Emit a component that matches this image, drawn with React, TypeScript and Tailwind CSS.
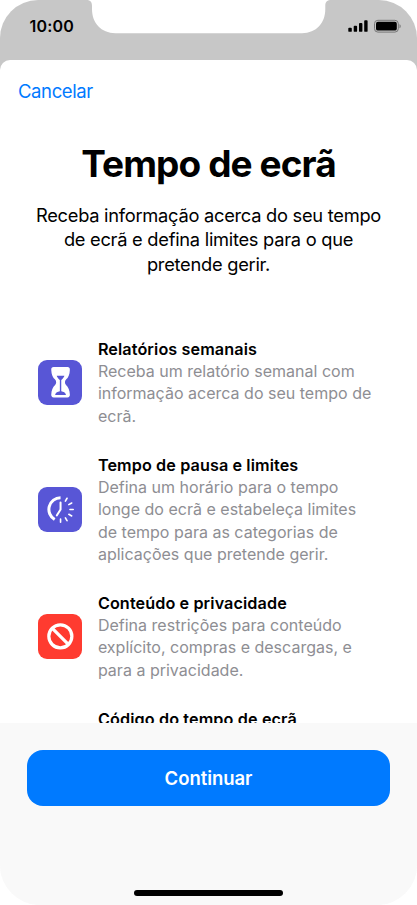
import type { ReactNode } from "react";

type Feature = {
  title: string;
  lines: string[];
  color: string;
  icon: ReactNode;
};

const HourglassIcon = () => (
  <svg viewBox="0 0 44 44" className="h-full w-full" aria-hidden="true">
    <path
      d="M15.5 7h13.6c1.7 0 2.500 1 2.400 2.800C31.300 14.500 30 17.300 27.700 19.300C26.300 20.700 26.300 23.300 27.700 24.700C30 26.700 31.300 30 31.500 34.200C31.600 36 30.800 37 29.100 37H15.500C13.800 37 13 36 13.100 34.200C13.300 30 14.600 26.700 16.900 24.700C18.300 23.300 18.300 20.700 16.900 19.300C14.600 17.300 13.300 14.500 13.100 9.800C13 8 13.800 7 15.500 7Z"
      fill="#fff"
    />
    <path
      d="M18.5 15.500h7.600c-.3 1.500-1.400 2.700-3.100 4.200v11.300c2.400.6 4 1.300 4.600 3 .1.500-.1.700-.6.700h-9.400c-.5 0-.7-.2-.6-.7.6-1.700 2.200-2.400 4.600-3v-11.300c-1.700-1.500-2.800-2.700-3.100-4.200Z"
      fill="#5856d6"
    />
  </svg>
);

const DowntimeIcon = () => (
  <svg viewBox="0 0 44 44" className="h-full w-full" fill="none" stroke="#fff" aria-hidden="true">
    <path d="M22.3 10.6A11.6 11.6 0 0 0 16.5 32.2" strokeWidth="3" />
    <path d="M22.3 15.3V22.2l-3.6 5.8" strokeWidth="2" strokeLinecap="round" strokeLinejoin="round" />
    <path
      d="M27.1 13.9l1.6-2.8M30.5 17.4l2.8-1.6M31.6 22.2h3.2M30.5 27l2.8 1.6M27.1 30.5l1.6 2.8M22.3 31.6v3.2"
      strokeWidth="1.6"
      strokeLinecap="round"
    />
  </svg>
);

const RestrictIcon = () => (
  <svg viewBox="0 0 44 44" className="h-full w-full" fill="none" stroke="#fff" strokeWidth="3.2" aria-hidden="true">
    <circle cx="22.1" cy="22.1" r="11.4" />
    <path d="M14.2 14.2L30 30" />
  </svg>
);

const features: Feature[] = [
  {
    title: "Relatórios semanais",
    lines: ["Receba um relatório semanal com", "informação acerca do seu tempo de", "ecrã."],
    color: "bg-[#5856d6]",
    icon: <HourglassIcon />,
  },
  {
    title: "Tempo de pausa e limites",
    lines: [
      "Defina um horário para o tempo",
      "longe do ecrã e estabeleça limites",
      "de tempo para as categorias de",
      "aplicações que pretende gerir.",
    ],
    color: "bg-[#5856d6]",
    icon: <DowntimeIcon />,
  },
  {
    title: "Conteúdo e privacidade",
    lines: ["Defina restrições para conteúdo", "explícito, compras e descargas, e", "para a privacidade."],
    color: "bg-[#ff3b30]",
    icon: <RestrictIcon />,
  },
];

const StatusBar = () => (
  <div className="relative h-[60px] shrink-0">
    {/* notch */}
    <svg viewBox="0 0 417 34" className="absolute inset-x-0 top-0 h-[34px] w-full" aria-hidden="true">
      <path
        d="M87.5 0C91 .5 92 2.5 92 6v3C92 23 101 33 115.5 33.2H302C316.5 33 325.3 23 325.3 9V6C325.3 2.5 326.3.5 330 0Z"
        fill="#fff"
      />
    </svg>
    <div className="relative flex h-[51px] items-center justify-between pl-[29.5px] pr-4">
      <span className="text-[16px] font-semibold tracking-[0.2px]">10:00</span>
      <svg viewBox="0 0 54 14" className="h-[14px] w-[54px]" aria-hidden="true">
        <rect x="1.3" y="8.8" width="3.5" height="4" rx=".9" />
        <rect x="6.7" y="6.8" width="3.4" height="6" rx=".9" />
        <rect x="12" y="4" width="3.4" height="8.8" rx=".9" />
        <rect x="17.2" y="1.2" width="3.4" height="11.6" rx=".9" />
        <rect x="27.5" y="1.3" width="23.8" height="11.8" rx="3.4" fill="none" stroke="#777" />
        <rect x="29" y="2.8" width="20.8" height="8.8" rx="1.9" />
        <path d="M52.5 5.2c1.6.6 1.6 3.4 0 4Z" fill="#777" />
      </svg>
    </div>
  </div>
);

const FeatureRow = ({ feature }: { feature: Feature }) => (
  <li className="flex items-center gap-[15.5px]">
    <div className={`h-[44.5px] w-[44.5px] shrink-0 overflow-hidden rounded-[9px] ${feature.color}`}>
      {feature.icon}
    </div>
    <div className="whitespace-nowrap text-[16px] leading-[22.3px]">
      <h2 className="text-[16.2px] font-semibold tracking-[0.1px]">{feature.title}</h2>
      <p className="tracking-[0.01px] text-[#8e8e93]">
        {feature.lines.map((line) => (
          <span key={line} className="block">
            {line}
          </span>
        ))}
      </p>
    </div>
  </li>
);

const App = () => {
  return (
    <div className="h-[905px] w-[417px] bg-white font-['Inter',sans-serif] text-black">
      <div className="flex h-full flex-col overflow-hidden rounded-t-[38px] rounded-b-[40px] bg-[linear-gradient(#c7c7c7_100px,#f9f9f9_100px)]">
        <StatusBar />
        <div className="flex min-h-0 flex-1 flex-col rounded-t-[10px] bg-white">
          <header className="flex h-[62px] shrink-0 items-center pl-[18px]">
            <button className="text-[18.5px] leading-6 tracking-[-0.4px] text-[#007aff]">Cancelar</button>
          </header>
          <main className="flex min-h-0 flex-1 flex-col overflow-hidden">
            <h1 className="mt-[18px] text-center text-[37px] font-bold leading-[48px] tracking-[-0.9px]">
              Tempo de ecrã
            </h1>
            <p className="mt-[14.8px] whitespace-nowrap text-center text-[18.3px] leading-[24.5px] tracking-[-0.27px]">
              <span className="block">Receba informação acerca do seu tempo</span>
              <span className="block">de ecrã e defina limites para o que</span>
              <span className="block">pretende gerir.</span>
            </p>
            <ul className="mt-[61.5px] flex flex-col gap-[26.7px] pl-[37.9px]">
              {features.map((feature) => (
                <FeatureRow key={feature.title} feature={feature} />
              ))}
              <li className="pl-[60px] text-[16.2px] font-semibold leading-[22.3px] tracking-[0.12px]">
                Código do tempo de ecrã
              </li>
            </ul>
          </main>
        </div>
        <footer className="flex h-[182px] shrink-0 flex-col bg-[#f9f9f9] px-[27px] pt-[27px]">
          <button className="h-[56px] w-full rounded-[16px] bg-[#007aff] pt-px text-[18.5px] font-semibold tracking-[-0.05px] text-white">
            Continuar
          </button>
          <div className="mx-auto mb-[9px] mt-auto h-[6px] w-[149px] rounded-full bg-black" />
        </footer>
      </div>
    </div>
  );
};

export default App;
